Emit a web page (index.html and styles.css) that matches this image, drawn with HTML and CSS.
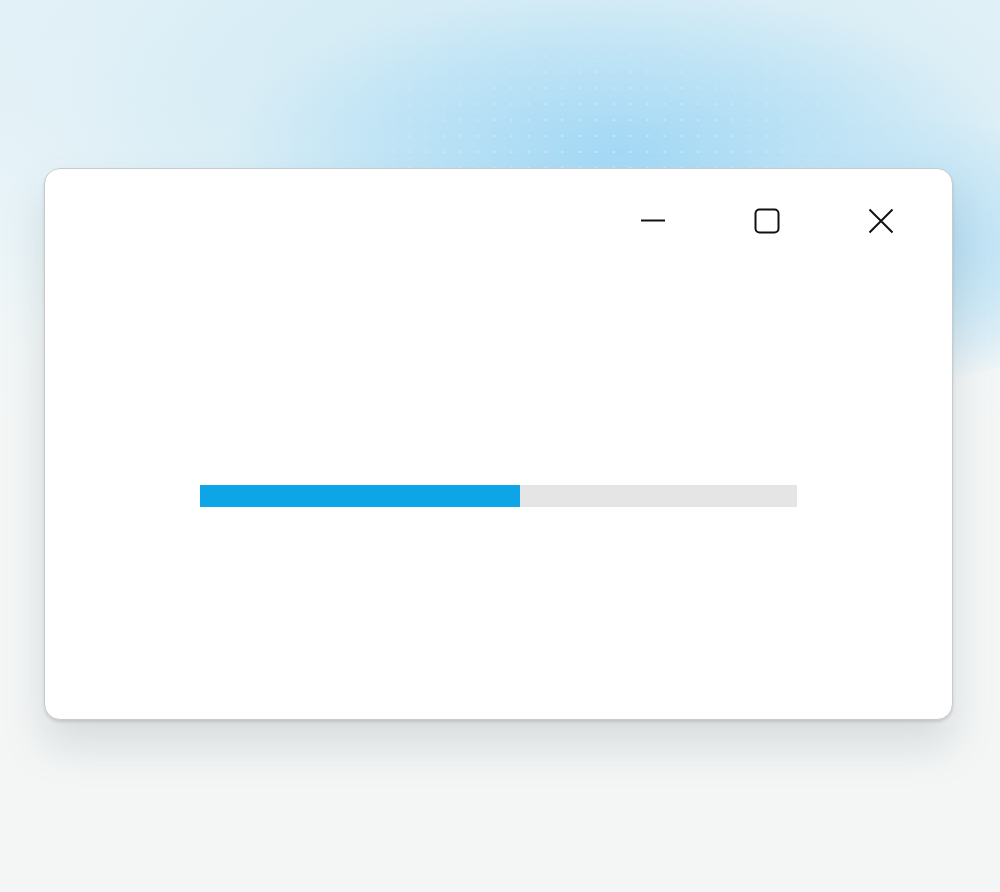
FILE: index.html
```html
<!DOCTYPE html>
<html>
<head>
<meta charset="utf-8">
<link rel="stylesheet" href="styles.css">
</head>
<body>
<div class="page">
  <div class="glow"></div>
  <div class="dots"></div>
  <div class="window">
    <div class="titlebar">
      <div class="btn">
        <svg width="26" height="26" viewBox="0 0 26 26"><path d="M1 12.5 H25" stroke="#111" stroke-width="2" fill="none"/></svg>
      </div>
      <div class="btn">
        <svg width="26" height="26" viewBox="0 0 26 26"><rect x="1.5" y="1.5" width="23" height="23" rx="4" stroke="#111" stroke-width="2" fill="none"/></svg>
      </div>
      <div class="btn">
        <svg width="26" height="26" viewBox="0 0 26 26"><path d="M1.5 1.5 L24.5 24.5 M24.5 1.5 L1.5 24.5" stroke="#111" stroke-width="2" fill="none"/></svg>
      </div>
    </div>
    <div class="content">
      <div class="progress"><div class="fill" style="width:53.6%"></div></div>
    </div>
  </div>
</div>
</body>
</html>
```
FILE: styles.css
```css
html, body {
  margin: 0;
  padding: 0;
}
body {
  width: 1000px;
  height: 892px;
  overflow: hidden;
  background: #f4f6f6;
  font-family: "Liberation Sans", sans-serif;
}
.page {
  position: relative;
  width: 1000px;
  height: 892px;
  overflow: hidden;
  display: flex;
  flex-direction: column;
  background:
    radial-gradient(ellipse 560px 230px at 620px 150px, rgba(160, 215, 245, 0.95) 0%, rgba(185, 225, 245, 0.8) 40%, rgba(215, 236, 245, 0.5) 70%, rgba(244, 246, 246, 0) 100%),
    radial-gradient(ellipse 700px 330px at 500px 80px, rgba(200, 232, 246, 0.9) 0%, rgba(220, 238, 246, 0.6) 60%, rgba(244, 246, 246, 0) 100%),
    linear-gradient(#e6f3f8 0px, #eef6f8 250px, #f4f6f6 420px);
}
.glow {
  position: absolute;
  left: 700px;
  top: 120px;
  width: 420px;
  height: 260px;
  border-radius: 50%;
  background: radial-gradient(ellipse at center, rgba(170, 218, 244, 0.85) 0%, rgba(190, 226, 245, 0.5) 50%, rgba(244, 246, 246, 0) 75%);
  pointer-events: none;
}
.dots {
  position: absolute;
  left: 180px;
  top: 0;
  width: 820px;
  height: 420px;
  background-image: radial-gradient(circle, rgba(255, 255, 255, 0.6) 1px, transparent 1.4px);
  background-size: 17px 16px;
  -webkit-mask-image: radial-gradient(ellipse 420px 200px at 420px 150px, rgba(0,0,0,0.6), transparent);
  mask-image: radial-gradient(ellipse 420px 200px at 420px 150px, rgba(0,0,0,0.6), transparent);
  pointer-events: none;
}
.window {
  position: relative;
  margin: 168px 0 0 44px;
  width: 909px;
  height: 552px;
  box-sizing: border-box;
  background: #ffffff;
  border: 1px solid #c5ccd0;
  border-radius: 16px;
  box-shadow: 0 2px 3px rgba(0, 0, 0, 0.12), 0 26px 40px rgba(120, 130, 130, 0.22);
  display: flex;
  flex-direction: column;
}
.titlebar {
  display: flex;
  justify-content: flex-end;
  gap: 88px;
  padding: 39px 58px 0 0;
  height: 26px;
}
.btn {
  width: 26px;
  height: 26px;
  display: flex;
}
.content {
  padding: 251px 155px 0 155px;
}
.progress {
  height: 22px;
  background: #e5e5e5;
  display: flex;
}
.fill {
  height: 100%;
  background: #0ea5e6;
}
```
